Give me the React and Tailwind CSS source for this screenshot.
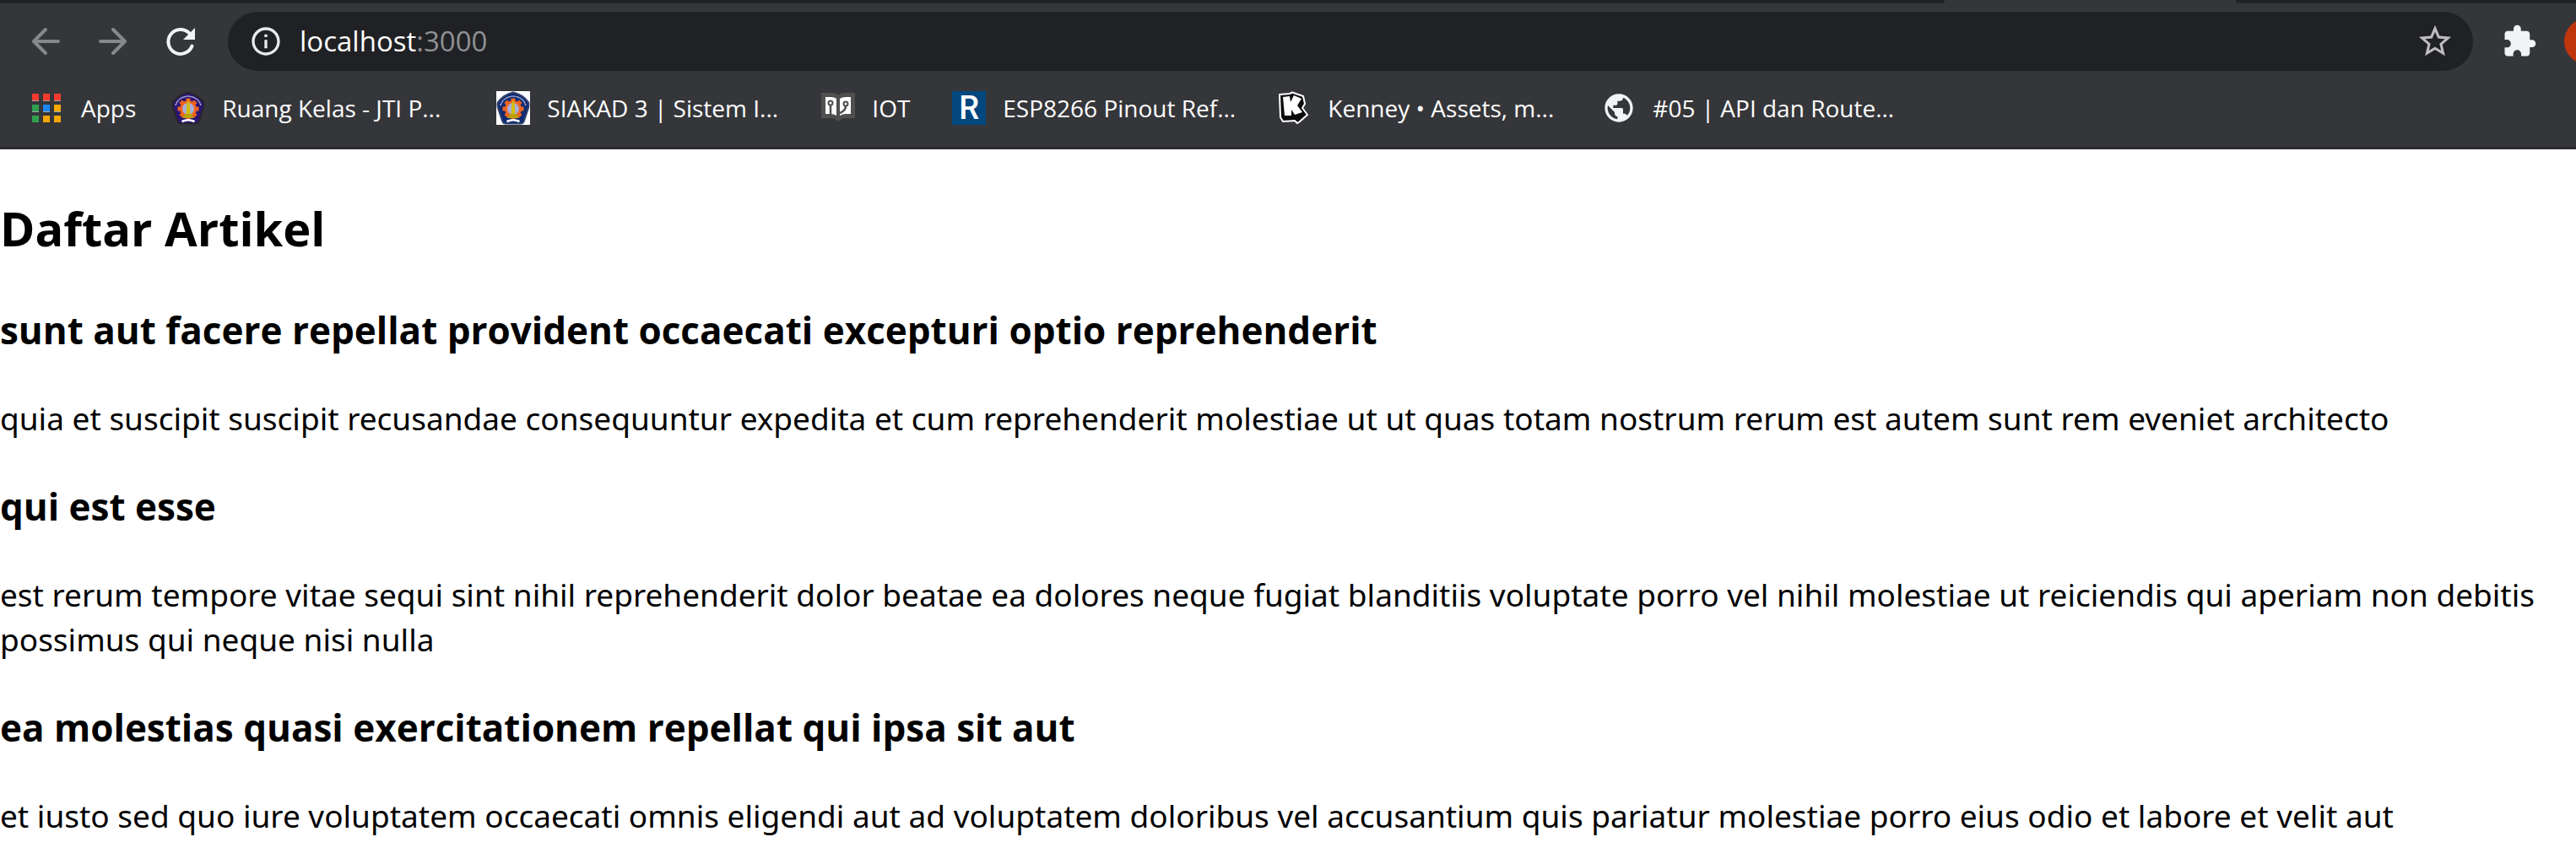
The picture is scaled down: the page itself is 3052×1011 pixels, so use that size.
import React from "react";
import { MdInfoOutline, MdStarBorder, MdExtension, MdPublic } from "react-icons/md";

function Arrow({ flipped }) {
  return (
    <svg viewBox="0 0 48 48" className={flipped ? "size-12 -scale-x-100" : "size-12"} fill="none" stroke="currentColor" strokeWidth="4" strokeLinecap="round" strokeLinejoin="round" aria-hidden="true">
      <path d="M39 24 H10 M24 10 L10 24 L24 38" />
    </svg>
  );
}

function Reload() {
  return (
    <svg viewBox="0 0 48 48" className="size-12" aria-hidden="true">
      <path d="M37.500 29.500 A14.500 14.500 0 1 1 34 14" fill="none" stroke="currentColor" strokeWidth="4" strokeLinecap="round" />
      <path d="M41 8 V22 H27Z" fill="currentColor" />
    </svg>
  );
}

function Crest({ boxed }) {
  const teeth = [0, 45, 90, 135, 180, 225, 270, 315];
  return (
    <svg viewBox="0 0 40 40" className="size-10 shrink-0" aria-hidden="true">
      {boxed && <rect width="40" height="40" fill="#fff" />}
      <path d="M20 1.500 Q31 4 38 13 Q39 15 38 20 L33 35 Q32 38.500 29 38.500 H11 Q8 38.500 7 35 L2 20 Q1 15 2 13 Q9 4 20 1.500Z" fill={boxed ? "#0d2a73" : "#2b1572"} stroke={boxed ? "#33436f" : "#28262b"} strokeWidth="2" />
      <path d="M5 17 Q8 7 20 6 Q32 7 35 17" fill="none" stroke="#b9bbdc" strokeWidth="1.500" strokeDasharray="2 0.500" />
      {teeth.map((t) => (
        <rect key={t} x="17.500" y="8.500" width="5" height="5" fill="#ef6420" transform={`rotate(${t} 20 21)`} />
      ))}
      <circle cx="20" cy="21" r="8.500" fill="#aaaed8" stroke="#ef6420" strokeWidth="3" />
      <path d="M20 10 L21.500 14 L22.500 28 H17.500 L18.500 14Z" fill="#d1bd08" />
      <path d="M16 27 H24 L27 32 H13Z" fill="#b9a010" />
      <path d="M12.500 36 Q20 32.500 27.500 36" fill="none" stroke="#fff" strokeWidth="2.500" />
    </svg>
  );
}

function AppsGrid() {
  const colors = ["#f43b30", "#f43b30", "#f43b30", "#30a050", "#1e88f5", "#f5a700", "#30a050", "#f5a700", "#f5a700"];
  return (
    <svg viewBox="0 0 34 34" className="size-[34px] shrink-0" aria-hidden="true">
      {colors.map((c, i) => (
        <g key={i}>
          <rect x={(i % 3) * 13} y={Math.floor(i / 3) * 13} width="8" height="8" fill={c} />
          <rect x={(i % 3) * 13} y={Math.floor(i / 3) * 13 + 8} width="8" height="1" fill="#a5a6a8" />
        </g>
      ))}
    </svg>
  );
}

function Book() {
  return (
    <svg viewBox="0 0 40 40" className="size-10 shrink-0" aria-hidden="true">
      <path d="M0 2 H13 Q18 2 20 5 Q22 2 27 2 H40 V32 H27 Q23 33 20 36 Q17 33 13 32 H0Z" fill="#4f4f4e" />
      <path d="M5 7 H11 Q16 7 18 9 V29 Q15 27 11 27 H5Z M22 9 Q25 7 29 7 H35 V27 H29 Q25 27 22 29Z" fill="#fff" />
      <path d="M11 17 V28 M29 18 Q29 23 22 26" fill="none" stroke="#4f4f4e" strokeWidth="2.500" />
      <circle cx="11" cy="14" r="2.500" fill="#fff" stroke="#4f4f4e" strokeWidth="2" />
      <circle cx="29" cy="15" r="2.500" fill="#fff" stroke="#4f4f4e" strokeWidth="2" />
    </svg>
  );
}

function RTile() {
  return <span aria-hidden="true" className="flex size-10 shrink-0 items-center justify-center bg-[#03477f] font-['Roboto'] text-[38px] leading-10 font-medium text-white">R</span>;
}

function KenneyMark() {
  return (
    <svg viewBox="0 0 40 40" className="size-10 shrink-0" aria-hidden="true">
      <path d="M3 4 L15 3 L18 1.500 L31 6 L33 15 L30 20 L36 28 L27 36 L24 38 L21 35 L7 36 L4 31Z" fill="#0c0c0c" stroke="#fff" strokeWidth="2" strokeLinejoin="round" />
      <path d="M7 7 L15 6 L16 13 L20 5 L29 9 L24 17 L30 25 L21 28 L17 22 L17 29 L9 29Z" fill="#fff" />
    </svg>
  );
}

const bookmarks = [
  { label: "Ruang Kelas - JTI P...", icon: <Crest />, width: "w-[285px]" },
  { label: "SIAKAD 3 | Sistem I...", icon: <Crest boxed />, width: "w-[285px]" },
  { label: "IOT", icon: <Book />, width: "w-[55px]" },
  { label: "ESP8266 Pinout Ref...", icon: <RTile />, width: "w-[285px]" },
  { label: "Kenney • Assets, m...", icon: <KenneyMark />, width: "w-[285px]" },
  { label: "#05 | API dan Route...", icon: <MdPublic className="size-10 shrink-0 text-[#f1f3f4]" />, width: "w-[285px]" },
];

const articles = [
  {
    title: "sunt aut facere repellat provident occaecati excepturi optio reprehenderit",
    body: "quia et suscipit suscipit recusandae consequuntur expedita et cum reprehenderit molestiae ut ut quas totam nostrum rerum est autem sunt rem eveniet architecto",
  },
  {
    title: "qui est esse",
    body: "est rerum tempore vitae sequi sint nihil reprehenderit dolor beatae ea dolores neque fugiat blanditiis voluptate porro vel nihil molestiae ut reiciendis qui aperiam non debitis possimus qui neque nisi nulla",
  },
  {
    title: "ea molestias quasi exercitationem repellat qui ipsa sit aut",
    body: "et iusto sed quo iure voluptatem occaecati omnis eligendi aut ad voluptatem doloribus vel accusantium quis pariatur molestiae porro eius odio et labore et velit aut",
  },
];

export default function App() {
  return (
    <div className="min-h-screen overflow-hidden bg-white font-['Open_Sans',sans-serif] text-black">
      <header className="border-b-[3px] border-[#292a2c] bg-[#35363a]">
        <div className="flex h-1">
          <div className="w-[2304px] rounded-br-lg bg-[#202124]" />
          <div className="w-[345px]" />
          <div className="flex-1 rounded-bl-lg bg-[#202124]" />
        </div>
        <div className="flex items-center overflow-hidden pt-[10px] pl-[30px]">
          <button aria-label="Back" className="mr-8 text-[#87888b]"><Arrow /></button>
          <button aria-label="Forward" className="mr-8 text-[#87888b]"><Arrow flipped /></button>
          <button aria-label="Reload" className="mr-8 text-[#f1f3f4]"><Reload /></button>
          <div className="flex h-[70px] flex-1 items-center rounded-full bg-[#202124] pr-[22px] pl-[25px]">
            <MdInfoOutline className="mr-5 size-10 text-[#e8eaed]" />
            <div className="flex-1 text-[33px] leading-10 text-white">localhost<span className="text-[#8f9194]">:3000</span></div>
            <button aria-label="Bookmark this page" className="text-[#bdbdbd]"><MdStarBorder className="size-[46px]" /></button>
          </div>
          <button aria-label="Extensions" className="mr-[32px] ml-[34px] text-[#f1f3f4]"><MdExtension className="size-[42px]" /></button>
          <button aria-label="Profile" className="-mr-10 size-[54px] shrink-0 rounded-full bg-[#bf360c]" />
        </div>
        <nav className="flex h-[90px] items-center gap-10 pb-[2px] pl-[38px] text-[28px] whitespace-nowrap text-white">
          <a href="#apps" className="flex items-center gap-6 pr-[2px]"><AppsGrid />Apps</a>
          {bookmarks.map((b) => (
            <a key={b.label} href="#bookmark" className="flex items-center gap-5">
              {b.icon}
              <span className={b.width}>{b.label}</span>
            </a>
          ))}
        </nav>
      </header>
      <main className="flex flex-col pt-[53px]">
        <h2 className="mb-[50px] text-[56px] leading-[80px] font-bold">Daftar Artikel</h2>
        {articles.map((a) => (
          <article key={a.title} className="mb-[47px]">
            <h3 className="mb-[47px] text-[44px] leading-[62px] font-bold">{a.title}</h3>
            <p className="font-['Noto_Sans',sans-serif] text-[37px] leading-[53px]">{a.body}</p>
          </article>
        ))}
      </main>
    </div>
  );
}
